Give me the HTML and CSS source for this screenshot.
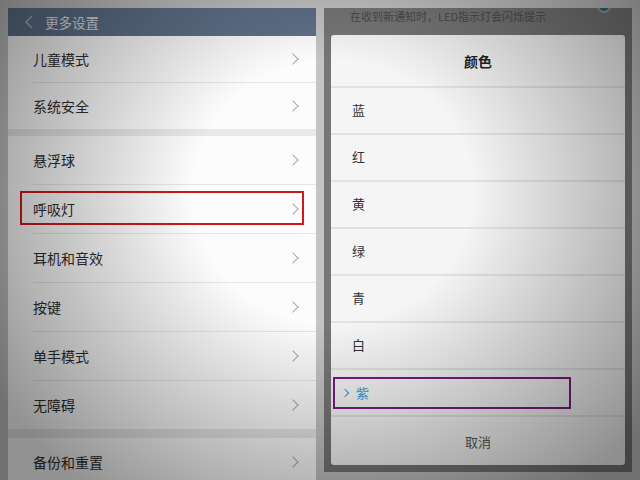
FILE: index.html
```html
<!doctype html>
<html lang="zh-CN">
<head>
<meta charset="UTF-8">
<title>更多设置 - 呼吸灯颜色</title>
<link rel="stylesheet" href="styles.css">
</head>
<body>
<div class="shot">
	<div class="phone left">
		<div class="topbar">
			<svg class="back" width="8" height="14" viewBox="0 0 8 14"><path d="M7 1 L1 7 L7 13" fill="none" stroke="#aab4c2" stroke-width="1.4"/></svg>
			<span>更多设置</span>
		</div>
		<ul class="group g1">
			<li>儿童模式<i class="arr"></i></li>
			<li class="last">系统安全<i class="arr"></i></li>
		</ul>
		<div class="gap"></div>
		<ul class="group g2">
			<li>悬浮球<i class="arr"></i></li>
			<li class="mark">呼吸灯<i class="arr"></i></li>
			<li>耳机和音效<i class="arr"></i></li>
			<li>按键<i class="arr"></i></li>
			<li>单手模式<i class="arr"></i></li>
			<li class="last">无障碍<i class="arr"></i></li>
		</ul>
		<div class="gap gap2"></div>
		<ul class="group g3">
			<li>备份和重置<i class="arr"></i></li>
		</ul>
	</div>
	<div class="phone right">
		<div class="notice">
			<span>在收到新通知时，LED指示灯会闪烁提示</span>
			<i class="knob"></i>
		</div>
		<div class="dialog">
			<div class="title">颜色</div>
			<ul class="opts">
				<li>蓝</li>
				<li>红</li>
				<li>黄</li>
				<li>绿</li>
				<li>青</li>
				<li>白</li>
				<li class="on"><span class="sel">紫</span></li>
			</ul>
			<div class="cancel">取消</div>
		</div>
	</div>
	<div class="vignette"></div>
</div>
</body>
</html>
```
FILE: styles.css
```css
*{
	padding:0;
	margin:0;
}
body{
	width:640px;
	height:480px;
	overflow:hidden;
	background:#c4c4c4;
	font-family:"Noto Sans CJK SC","Liberation Sans",sans-serif;
}
.shot{
	position:relative;
	display:flex;
	gap:8px;
	padding:8px 8px 0;
	height:472px;
}
.phone{
	width:308px;
	flex:none;
}
.phone ul{
	list-style:none;
}
/* left screen */
.left{
	background:#fcfcfc;
	height:480px;
}
.topbar{
	height:28px;
	background:#5f7189;
	display:flex;
	align-items:center;
	padding-left:17px;
	color:#dde3ea;
	font-size:13.5px;
}
.topbar .back{
	margin-right:12px;
}
.group li{
	position:relative;
	display:flex;
	align-items:center;
	margin-left:25px;
	color:#2e2e2e;
	font-size:14px;
	border-bottom:1px solid #e6e6e6;
}
.group li.last{
	border-bottom:none;
}
.g1 li{
	height:46px;
}
.g2 li, .g3 li{
	height:48px;
}
.gap{
	height:7px;
	background:#e8e8e8;
}
.gap2{
	height:9px;
}
.arr{
	position:absolute;
	right:19px;
	top:50%;
	width:7px;
	height:7px;
	margin-top:-4px;
	border-top:1px solid #a8a8a8;
	border-right:1px solid #a8a8a8;
	transform:rotate(45deg);
}
.mark::before{
	content:"";
	position:absolute;
	left:-13px;
	right:12px;
	top:6px;
	bottom:8px;
	border:2px solid #d0181c;
}
/* right screen */
.right{
	background:#767676;
	height:464px;
	padding:0 7px 7px;
	box-sizing:border-box;
	display:flex;
	flex-direction:column;
	overflow:hidden;
}
.notice{
	position:relative;
	height:27px;
	box-sizing:border-box;
	padding:1px 0 0 19px;
	font-size:11px;
	line-height:14px;
	color:#4a4a4a;
}
.knob{
	position:absolute;
	right:14px;
	top:-9px;
	width:10px;
	height:10px;
	border-radius:50%;
	background:#2f6a78;
	border:2px solid #8fa0a4;
}
.dialog{
	flex:1;
	background:#f5f5f5;
	border-radius:3px;
	display:flex;
	flex-direction:column;
}
.title{
	height:51px;
	display:flex;
	align-items:center;
	justify-content:center;
	font-size:14px;
	font-weight:bold;
	color:#222;
	border-bottom:2px solid #e2e2e2;
}
.opts li{
	display:flex;
	align-items:center;
	padding-left:21px;
	padding-bottom:2px;
	box-sizing:border-box;
	height:47px;
	font-size:13px;
	color:#333;
	border-bottom:2px solid #e2e2e2;
}
.opts li.on{
	padding-left:2px;
	padding-bottom:0;
}
.sel{
	display:flex;
	align-items:center;
	width:234px;
	height:28px;
	border:2px solid #7a1b7f;
	color:#3a9ad6;
}
.sel::before{
	content:"";
	width:5px;
	height:5px;
	margin:0 8px 0 7px;
	border-top:1.5px solid #3a9ad6;
	border-right:1.5px solid #3a9ad6;
	transform:rotate(45deg);
}
.cancel{
	flex:1;
	display:flex;
	align-items:center;
	justify-content:center;
	font-size:13px;
	color:#555;
}
.vignette{
	position:absolute;
	left:0;
	top:0;
	width:640px;
	height:480px;
	pointer-events:none;
	background:radial-gradient(ellipse 62% 78% at 52% 40%,rgba(0,0,0,0) 35%,rgba(0,0,0,0.42) 100%);
}
```
